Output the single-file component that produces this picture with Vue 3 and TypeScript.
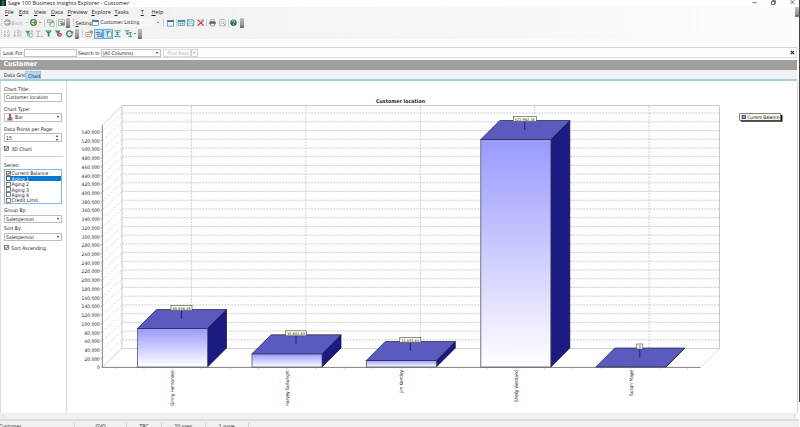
<script setup lang="ts">
interface Bar { name: string; left: number; top: number; value: string; labelWidth: number; nameLength: number }

const menus = ['File', 'Edit', 'View', 'Data', 'Preview', 'Explore', 'Tasks', 'Tools', 'Help']
const series = ['Current Balance', 'Aging 1', 'Aging 2', 'Aging 3', 'Aging 4', 'Credit Limit']

const floor = 368
const step = 8.72
const depth = 19
const barWidth = 70
const ticks = Array.from({ length: 28 }, (_, i) => ({
  label: (i * 20000).toLocaleString('en-US'),
  y: floor - i * step,
}))
const columns = [191.6, 305.9, 420.3, 534.7, 649.1]
const floorTicks = Array.from({ length: 21 }, (_, i) => 115.5 + i * 28.6)

const bars: Bar[] = [
  { name: 'Ginny Hernandez', left: 137.5, top: 329.5, value: '88,638.39', labelWidth: 21, nameLength: 36 },
  { name: 'Harvey Earlwright', left: 252, top: 354.8, value: '30,602.63', labelWidth: 21, nameLength: 36 },
  { name: 'Jim Kentley', left: 366.3, top: 361.5, value: '15,645.64', labelWidth: 21, nameLength: 23 },
  { name: 'Shelly Westland', left: 480.8, top: 140.5, value: '522,982.48', labelWidth: 23, nameLength: 32 },
  { name: 'Susan Maye', left: 595.8, top: 368, value: '0', labelWidth: 6, nameLength: 26 },
]

const topFace = (b: Bar) =>
  `${b.left},${b.top} ${b.left + depth},${b.top - depth} ${b.left + barWidth + depth},${b.top - depth} ${b.left + barWidth},${b.top}`
const sideFace = (b: Bar) => {
  const r = b.left + barWidth
  return `${r},${b.top} ${r + depth},${b.top - depth} ${r + depth},${floor - depth} ${r},${floor}`
}
</script>

<template>
  <div class="window">
    <div class="main">
      <header class="titlebar">
        <svg class="app-icon" viewBox="0 0 6 7"><rect width="6" height="6" fill="#0b2420" /><path d="M4.4 1.2H2.4Q1.4 1.4 2 2.5L4 3.5Q4.6 4.8 3.4 5H1.6" fill="none" stroke="#26c36b" stroke-width=".9" /></svg>
        <span class="title">Sage 100 Business Insights Explorer - Customer</span>
        <svg class="controls" viewBox="0 0 48 7" fill="none" stroke="#333" stroke-width=".7">
          <path d="M2.5 2.6h4M21.5 1.6h3v3h-3zM22.4 1.5V.6h3v3h-.8M40.5.2l4 4M44.5.2l-4 4" />
        </svg>
      </header>

      <div class="bars">
        <nav class="menu">
          <span v-for="m in menus" :key="m" :class="['menu-item', m.toLowerCase()]"><u>{{ m[0] }}</u>{{ m.slice(1) }}</span>
          <i class="overflow end"></i>
        </nav>

        <div class="tools first">
          <i class="grip"></i>
          <svg viewBox="0 0 10 10"><circle cx="5" cy="5" r="3.6" fill="#aaa" /><path d="M7.2 5H3M4.8 3.1L3 5l1.8 1.9" fill="none" stroke="#fff" /></svg>
          <span class="label muted">Back</span>
          <i class="caret faint"></i>
          <svg viewBox="0 0 10 10"><circle cx="5" cy="5" r="3.1" fill="#fff" stroke="#4a7b3a" stroke-width="1.4" /><path d="M2.8 5H7M5.4 3.4L7 5 5.4 6.6" fill="none" stroke="#4a7b3a" /></svg>
          <i class="caret"></i>
          <i class="sep"></i>
          <svg viewBox="0 0 10 10"><rect x="1.5" y="2" width="4" height="3" fill="#d8e5c9" stroke="#8a9b75" stroke-width=".7" /><rect x="4.5" y="5" width="4.5" height="4" fill="#fff" stroke="#7ba06c" stroke-width=".7" /><path d="M4 8L8 3M6.2 3H8v2" fill="none" stroke="#4a9454" stroke-width=".8" /></svg>
          <i class="sep"></i>
          <svg viewBox="0 0 10 10"><rect x="1.5" y="2" width="7" height="6.5" fill="#fff" stroke="#888" stroke-width=".7" /><path d="M3 4h4M3 6h2" stroke="#777" stroke-width=".8" /><path d="M4.5 5h4v3h-4z" fill="#48a16a" /></svg>
          <i class="overflow"></i>
          <i class="grip"></i>
          <span class="label"><u>S</u>etting</span>
          <svg viewBox="0 0 10 10"><rect x="1.5" y="2.5" width="7" height="6" fill="#fff" stroke="#517da1" stroke-width=".7" /><path d="M1.5 2.5h7v2h-7z" fill="#2d78b9" /><path d="M1.5 1.8h3v2h-3z" fill="#50a875" /></svg>
          <span class="label combo-text">Customer Listing</span>
          <i class="caret"></i>
          <i class="sep"></i>
          <svg viewBox="0 0 10 10"><rect x="1.5" y="3" width="7" height="6" fill="#eef5fc" stroke="#4179aa" stroke-width=".7" /><path d="M1.5 2.8h7v1.6h-7z" fill="#236397" /><path d="M7.5 1l1.2 1.2" stroke="#de9a32" /></svg>
          <i class="sep"></i>
          <svg viewBox="0 0 10 10"><rect x="1.2" y="2.5" width="7.5" height="6" fill="#fff" stroke="#4179aa" stroke-width=".7" /><path d="M1.2 2.7h7.5v1.5H1.2z" fill="#236397" /><path d="M3.7 4v4M6.2 4v4M1.5 6.3h7" stroke="#58a494" stroke-width=".7" /></svg>
          <svg viewBox="0 0 10 10"><path d="M1.5 2h6l1.2 1.2V8.5H1.5z" fill="#d2ece8" stroke="#337e85" stroke-width=".8" /><path d="M3.2 2h3.4v2H3.2zM3.2 6h4v2.5h-4z" fill="#fff" stroke="#55989c" stroke-width=".5" /></svg>
          <svg viewBox="0 0 10 10"><rect x="1.5" y="2" width="6" height="6" fill="#fff" stroke="#b9bbc0" stroke-width=".7" /><path d="M2 2l6.5 6.5M8.5 2L2 8.5" stroke="#c53831" stroke-width="1.3" /></svg>
          <i class="sep"></i>
          <svg viewBox="0 0 10 10"><path d="M3 1.8h4V4H3z" fill="#fff" stroke="#666" stroke-width=".6" /><path d="M1.5 4h7v3h-7z" fill="#555" /><path d="M3 6h4v2.8H3z" fill="#fff" stroke="#555" stroke-width=".6" /></svg>
          <svg viewBox="0 0 10 10"><path d="M2 1.5h4.5L8 3v5.7H2z" fill="#fff" stroke="#8c8c8c" stroke-width=".7" /><circle cx="5" cy="5" r="1.5" fill="none" stroke="#8ba65f" stroke-width=".7" /><path d="M6 6l1.8 1.8" stroke="#8e743b" stroke-width=".8" /></svg>
          <i class="sep"></i>
          <svg viewBox="0 0 10 10"><circle cx="5" cy="5.2" r="3.5" fill="#25735c" /><path d="M3.7 4.1q.1-1.2 1.4-1.2t1.3 1.2q-.1.6-1 1.1-.3.2-.3.7M5.1 7v.8" fill="none" stroke="#e8fff5" stroke-width=".9" /></svg>
          <i class="overflow"></i>
        </div>

        <div class="tools second">
          <i class="grip"></i>
          <svg viewBox="0 0 10 10" stroke="#aaa" fill="none" stroke-width=".8"><path d="M2 1.8v6.5M.8 7L2 8.5 3.2 7M4.8 4.4L6 1.8l1.2 2.6M4.8 5.8h2.5L4.8 8.4h2.6" /></svg>
          <svg viewBox="0 0 10 10" stroke="#aaa" fill="none" stroke-width=".8"><path d="M2 1.8v6.5M.8 7L2 8.5 3.2 7M4.8 1.8h2.4L4.8 4.4h2.6M4.8 8.4L6 5.8l1.2 2.6M8.8 2v6.4" /></svg>
          <svg viewBox="0 0 10 10"><path d="M1 2h6L5 5v3.5L3.8 7.8V5z" fill="#439a78" /><path d="M6 5h3v4H6z" fill="#fff" stroke="#6d8f90" stroke-width=".7" /><path d="M8 2h1v2" fill="none" stroke="#777" stroke-width=".8" /></svg>
          <svg viewBox="0 0 10 10"><path d="M1 2.4h5M3.5 2.4v6M2 8.4h3M6.5 8.4h2.5" fill="none" stroke="#aaa" stroke-width=".9" /></svg>
          <svg viewBox="0 0 10 10"><path d="M1.3 1.8h7.4L6 5v3.8L4.2 7.7V5z" fill="#248568" /><path d="M3.2 2.6h3.5" stroke="#a9d9c7" stroke-width=".7" /></svg>
          <svg viewBox="0 0 10 10"><path d="M1 1.8h6.5L5 5v3.2L3.5 7.4V5z" fill="#3a876c" /><circle cx="6.6" cy="6.5" r="2.4" fill="#c44a4a" /><path d="M5.7 5.6l1.8 1.8M7.5 5.6L5.7 7.4" stroke="#fff" stroke-width=".6" /></svg>
          <svg viewBox="0 0 10 10"><path d="M7.8 4A3.1 3.1 0 1 0 8 6" fill="none" stroke="#317b68" stroke-width="1.4" /><path d="M9.2 2v3H6.1z" fill="#317b68" /><path d="M3.6 5h3" stroke="#82b8ab" stroke-width=".7" /></svg>
          <i class="overflow"></i>
          <i class="grip"></i>
          <svg viewBox="0 0 10 10"><rect x="1" y="4" width="6" height="4.5" fill="#fff" stroke="#888" stroke-width=".7" /><path d="M2.2 6h3.4" stroke="#777" stroke-width=".8" /><path d="M4.4 1.7h4.4v3.2H6z" fill="#c79958" /></svg>
          <span class="pressed"><svg viewBox="0 0 10 10"><path d="M1 3h5M2 5.3h4M2.5 7.8h6M7.7 3v5" fill="none" stroke="#39566d" stroke-width="1" /></svg></span>
          <span class="pressed"><svg viewBox="0 0 10 10"><path d="M3.2 2.3h4.8v6.4H3.2z" fill="#fff" stroke="#547f78" stroke-width=".8" /><path d="M.8 1.5h5L4 4v3L2.7 6V4z" fill="#4b907d" /></svg></span>
          <svg viewBox="0 0 10 10"><path d="M1.6 2h6.8M1.6 8.3h6.8M3 3.8h4M5 3.5v3.2M3.2 6.3h3.6" fill="none" stroke="#3f8686" stroke-width="1" /></svg>
          <svg viewBox="0 0 10 10"><path d="M1 2h5M3.5 2v4M2 5.5h4M5 4h3.5M7 4v4.3M5 8.3h4" fill="none" stroke="#438c82" stroke-width="1" /></svg>
          <i class="caret"></i>
          <i class="overflow"></i>
        </div>
      </div>

      <div class="search">
        <span class="look">Look For:</span>
        <i class="box"></i>
        <span class="in">Search In</span>
        <span class="box select">(All Columns)<i class="caret"></i></span>
        <span class="find">Find Next</span>
        <span class="find-drop"><i class="caret faint"></i></span>
        <svg class="close" viewBox="0 0 5 5"><path d="M.8.8l3.2 3.4M4 .8L.8 4.2" stroke="#222" stroke-width="1.1" /></svg>
      </div>

      <h1 class="heading">Customer</h1>
      <div class="tabs"><span class="tab grid-tab">Data Grid</span><span class="tab active">Chart</span></div>

      <div class="body">
        <aside class="side">
          <label class="t-title">Chart Title:</label>
          <div class="field">Customer location</div>
          <label>Chart Type:</label>
          <div class="field">
            <svg class="type-icon" viewBox="0 0 8 8"><path d="M1.5 5h1.3v2H1.5z" fill="#418857" /><path d="M3 1h2v6H3z" fill="#cf4a43" /><path d="M5 4h1.5v3H5z" fill="#7c9ac2" /><path d="M.8 7.3h6" stroke="#777" stroke-width=".6" /></svg>
            <span>Bar</span><i class="caret"></i>
          </div>
          <label>Data Points per Page:</label>
          <div class="field"><span>15</span><svg class="spin" viewBox="0 0 4 8"><path d="M.6 2.8L2 1.2l1.4 1.6zM.6 5.2L2 6.8l1.4-1.6z" fill="#222" /></svg></div>
          <div class="check"><svg viewBox="0 0 5 5"><rect x=".4" y=".4" width="4.2" height="4.2" fill="#fff" stroke="#333" stroke-width=".6" /><path d="M1 2.4l1.1 1.2L4 1.2" fill="none" stroke="#222" stroke-width=".8" /></svg>3D Chart</div>
          <hr>
          <label class="t-series">Series:</label>
          <ul class="series">
            <li v-for="(s, i) in series" :key="s" :class="{ selected: i === 1 }">
              <svg viewBox="0 0 5 5"><rect x=".4" y=".4" width="4.2" height="4.2" fill="#fff" stroke="#333" stroke-width=".6" /><path v-if="i === 0" d="M1 2.4l1.1 1.2L4 1.2" fill="none" stroke="#222" stroke-width=".9" /></svg>
              <span>{{ s }}</span>
            </li>
          </ul>
          <label class="t-group">Group By:</label>
          <div class="field low"><span>Salesperson</span><i class="caret"></i></div>
          <label class="t-sort">Sort By:</label>
          <div class="field low"><span>Salesperson</span><i class="caret"></i></div>
          <div class="check sort"><svg viewBox="0 0 5 5"><rect x=".4" y=".4" width="4.2" height="4.2" fill="#fff" stroke="#333" stroke-width=".6" /><path d="M1 2.4l1.1 1.2L4 1.2" fill="none" stroke="#222" stroke-width=".8" /></svg>Sort Ascending</div>
        </aside>

        <svg class="chart" viewBox="67 82 730 332">
          <defs>
            <linearGradient id="face" x1="0" y1="0" x2="0" y2="1">
              <stop offset="0" stop-color="#9999ff" /><stop offset="1" stop-color="#ffffff" />
            </linearGradient>
          </defs>
          <text class="chart-title" x="400.5" y="103.8" text-anchor="middle" textLength="49">Customer location</text>

          <g class="dashes">
            <template v-for="(t, i) in ticks" :key="t.label">
              <path v-if="i" :d="`M122 ${t.y - 18.5}H719`" />
              <path v-if="i" class="slant" :d="`M102.5 ${t.y}L122 ${t.y - 18.5}`" />
            </template>
            <path v-for="x in columns" :key="x" :d="`M${x} 107V349`" />
          </g>
          <path class="wall thin" d="M102.5 126L122 106.8M102.5 368L122 349.5" />
          <path class="wall faintline" d="M700.5 368L719.5 349.5" />
          <path class="wall" d="M122 349.5V106.5H719.5V349.5" />
          <path class="wall thin" d="M122 349.5H719.5" />
          <path class="axis" d="M102.3 126V368.4H700.5" />
          <path v-for="x in floorTicks" :key="x" class="minor" :d="`M${x} 368.5v1.3`" />

          <g v-for="t in ticks" :key="t.y">
            <path class="minor" :d="`M100.5 ${t.y + .3}h2`" />
            <text class="num" x="99.8" :y="t.y + 2.4" text-anchor="end">{{ t.label }}</text>
          </g>

          <g v-for="b in bars" :key="b.name">
            <polygon class="side-face" :points="sideFace(b)" />
            <rect v-if="floor > b.top" class="front-face" :x="b.left" :y="b.top" :width="barWidth" :height="floor - b.top" />
            <polygon class="top-face" :points="topFace(b)" />
            <path class="pointer" :d="`M${b.left + 44} ${b.top - 18}v8.5`" />
            <rect class="tag" :x="b.left + 44 - b.labelWidth / 2" :y="b.top - 23" :width="b.labelWidth" height="5" />
            <text class="tag-text" :x="b.left + 44" :y="b.top - 18.9" text-anchor="middle" :textLength="b.labelWidth > 10 ? b.labelWidth - 3 : undefined">{{ b.value }}</text>
            <text class="name" :transform="`translate(${b.left + 36.7} 371) rotate(-90)`" text-anchor="end" :textLength="b.nameLength">{{ b.name }}</text>
          </g>

          <rect x="741" y="116" width="41.5" height="6.7" fill="#111" />
          <rect x="739.7" y="114.7" width="41" height="6.6" fill="#fffef0" stroke="#444" stroke-width=".7" />
          <rect x="742" y="116.4" width="3.6" height="3.3" fill="#8b8bf0" stroke="#222" stroke-width=".6" />
          <text class="legend" x="747.3" y="120" textLength="32">Current Balance</text>
        </svg>
      </div>

      <div class="scroll"><span>‹</span><span>›</span></div>
      <footer class="status">
        <span class="s1">Customer</span><span class="s2">GVO</span><span class="s3">TRC</span><span class="s4">20 rows</span><span class="s5">1 page</span><span class="s6"></span>
      </footer>
    </div>
    <div class="edge"></div>
  </div>
</template>

<style>
body { margin: 0; overflow: hidden; }
</style>

<style scoped>
* { box-sizing: border-box; }
.window { display: flex; width: 800px; height: 427px; overflow: hidden; background: #fcfcfc; font: 5.1px/6px "DejaVu Sans Condensed", "DejaVu Sans", "Noto Sans", sans-serif; color: #222; white-space: nowrap; }
.main { display: flex; flex-direction: column; width: 799px; }
.edge { width: 1px; height: 402px; background: #444; }
svg { display: block; }
i { display: block; }
.titlebar { display: flex; height: 8px; background: #fff; }
.app-icon { width: 6px; height: 7px; }
.title { margin-left: 2px; font: 5.5px/6px "Open Sans", sans-serif; flex: 1; }
.controls { width: 48px; height: 7px; margin-right: 1px; }
.bars { height: 32px; flex: none; background: linear-gradient(90deg, #f0f0f0, #fcfcfc); }
.menu { display: grid; grid-template-columns: 14px 15px 17px 16.5px 24px 23px 18.5px 18.5px 20px 1fr; height: 10px; padding-left: 5px; font: 5.5px/10px "Open Sans", sans-serif; }
.menu u, .label u { text-decoration-thickness: .5px; text-underline-offset: .6px; }
.tools { display: grid; align-items: center; justify-items: center; height: 11px; }
.tools > svg { width: 9px; height: 9px; }
.first { grid-template-columns: 2.5px 9px 12px 6px 8px 5px 3px 9px 3px 7px 6px 5px 16px 8px 54px 8px 3px 11px 1px 9px 9px 11px 2.5px 9px 11px 1px 9.5px 6px; }
.second { grid-template-columns: 3px 9px 10px 13px 8px 10px 10px 12px 4.5px 5px 9px 10px 9px 10px 11px 3px 7px; }
.grip { width: 1px; height: 7px; border-left: 1px dotted #bbb; }
.sep { width: 1px; height: 8px; background: #cfcfcf; }
.label { justify-self: start; }
.muted { color: #aaa; }
.combo-text { width: 53px; height: 9px; padding-left: 1px; line-height: 9px; background: #f7f7f7; }
.caret { width: 0; height: 0; border: 1.7px solid transparent; border-top: 2.2px solid #222; border-bottom: 0; }
.tools .caret { border-width: 1.3px; border-top-width: 1.6px; border-bottom: 0; }
.caret.faint { border-top-color: #999; }
.overflow { width: 4px; height: 10px; border-radius: 0 1px 1px 0; background: linear-gradient(#c0c0c0, #8f8f8f); border-bottom: 2px solid #707070; }
.overflow.end { justify-self: end; margin-right: 0; }
.pressed { width: 9.5px; height: 10px; padding: .5px; background: #c6e2f8; border: .8px solid #62aeea; }
.pressed svg { width: 8px; height: 8px; }
.search { display: flex; align-items: center; flex: none; height: 11px; margin: 8px 2px 0 0; border: 1px solid #dcdcdc; border-top-color: #d5d5d5; background: #fdfdfd; }
.look { width: 21px; margin-left: 2px; }
.box { width: 53px; height: 8px; background: #fff; border: .8px solid #c4c4c4; }
.in { width: 22.5px; margin-left: 1px; }
.select { display: flex; align-items: center; justify-content: space-between; width: 60px; padding: 0 2px 0 1px; }
.find { width: 28px; height: 8px; margin-left: 2px; padding-left: 4px; line-height: 6.5px; color: #b6b6b6; border: .8px solid #ddd; }
.find-drop { display: flex; align-items: center; justify-content: center; width: 7px; height: 8px; border: 1px solid #d0d0d0; }
.close { width: 5px; height: 5px; margin-left: auto; margin-right: 1.5px; }
.heading { flex: none; height: 10px; margin: 2px 2px 0 0; padding-left: 3.5px; background: #9f9f9f; color: #fff; font: bold 6.9px/9.5px "DejaVu Sans Condensed", "DejaVu Sans", sans-serif; }
.tabs { display: flex; flex: none; height: 11px; padding-top: 1px; background: #f1f1f1; border-bottom: 2px solid #a9cce5; margin-right: 2px; }
.tab { line-height: 9px; }
.grid-tab { width: 25px; padding-left: 4px; }
.active { width: 16px; padding-left: 2px; background: #b5d7f2; border: solid #9ec7e5; border-width: .5px .5px 0; }
.body { display: flex; flex: none; width: 798px; height: 332px; background: #fff; border-left: 1px solid #ddd; border-right: 1px solid #d5d5d5; }
.side { width: 66px; padding: 4.5px 4px 0 3px; border-right: 1px solid #d8d8d8; display: flex; flex-direction: column; }
.side label { height: 6px; margin-bottom: 1.7px; }
.field { display: flex; align-items: center; justify-content: space-between; height: 8.4px; margin-bottom: 4px; padding: 0 2px 0 1px; border: .7px solid #bdbdbd; background: #fff; }
.field .caret { margin-left: auto; }
.type-icon { width: 8px; height: 8px; margin-right: 1px; }
.spin { width: 4px; height: 8px; }
.check { display: flex; align-items: center; height: 6px; gap: 2px; }
.check svg { width: 5px; height: 5px; margin-left: .3px; }
.side hr { width: 59px; margin: 4.4px 0 0; border: 0; border-top: 1px solid #cfcfcf; }
.side .t-series { margin: 4.5px 0 1px; }
.series { margin: 0; padding: 1px .5px; list-style: none; height: 35px; border: 1px solid #84b9e4; }
.series li { display: flex; align-items: center; height: 5.4px; gap: 1px; }
.series svg { width: 5px; height: 5px; }
.series .selected { background: #0c78d0; color: #fff; }
.side .t-group { margin: 3.2px 0 2px; }
.field.low { height: 8.4px; margin-bottom: 1.4px; }
.side .t-sort { margin-bottom: 2px; }
.sort { margin-top: 2.5px; }
.chart { width: 730px; height: 332px; }
.chart text { fill: #222; }
.chart-title { font-size: 5.2px; font-weight: bold; }
.num { font-size: 4.9px; }
.name { font-size: 4.8px; }
.tag-text { font-size: 3.8px; }
.legend { font-size: 4.8px; }
.dashes path { fill: none; stroke: #c6c6c6; stroke-width: .9; stroke-dasharray: 2 1.2; }
.dashes .slant { stroke: #cfcfcf; stroke-dasharray: 2 2; }
.wall { fill: none; stroke: #c9c9c9; stroke-width: 1; }
.wall.thin { stroke: #bbb; stroke-width: .7; }
.wall.faintline { stroke: #ddd; }
.axis { fill: none; stroke: #808080; stroke-width: 1; }
.minor { stroke: #999; stroke-width: .6; }
.front-face { fill: url(#face); stroke: #555566; stroke-width: .8; }
.top-face { fill: #5a5abf; stroke: #20203c; stroke-width: .7; }
.side-face { fill: #1a1a80; stroke: #0c0c3c; stroke-width: .7; }
.pointer { stroke: #151540; stroke-width: .8; }
.tag { fill: #fffff0; stroke: #444; stroke-width: .6; }
.scroll { display: flex; justify-content: space-between; flex: none; height: 6px; padding: 0 2px; background: #f0f0f0; color: #888; line-height: 5px; margin-right: 2px; }
.status { display: flex; flex: none; height: 10px; margin-top: 0; border-top: 2px solid #dcdcdc; background: #f0f0f0; line-height: 6px; padding-top: 2px; }
.status span { text-align: center; border-right: 1px solid #d5d5d5; }
.status .s1 { width: 75px; text-align: left; text-indent: -1px; }
.s2 { width: 52px; }
.s3 { width: 35px; }
.s4 { width: 43.5px; }
.s5 { width: 43.5px; }
.status .s6 { flex: 1; border: 0; }
</style>
